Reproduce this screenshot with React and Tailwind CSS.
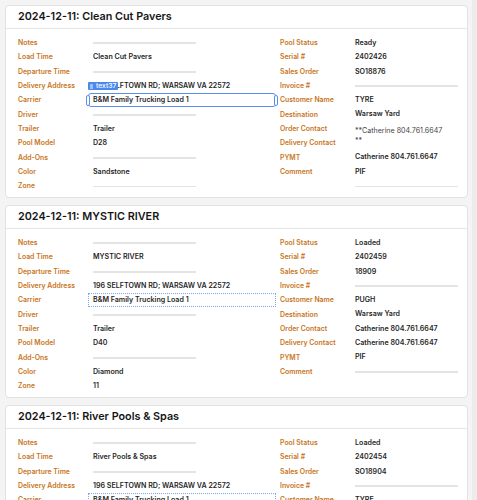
import React from "react";

const ORANGE = "text-[#c9751c]";

function Line() {
  return <div className="h-[1.5px] w-[103px] bg-[#e4e4e4]" />;
}

function Row({ children, className = "" }) {
  return <div className={`h-[14.33px] flex items-center ${className}`}>{children}</div>;
}

function Label({ children }) {
  return (
    <Row>
      <span className={`text-[6.9px] font-semibold ${ORANGE} whitespace-nowrap`}>{children}</span>
    </Row>
  );
}

const VAL = "text-[7.1px] font-semibold text-[#1f1f1f] whitespace-nowrap";

function Val({ v }) {
  if (v === null) {
    return (
      <Row>
        <Line />
      </Row>
    );
  }
  if (typeof v === "object" && v.kind === "two") {
    return (
      <div className="h-[28.66px] flex flex-col justify-center leading-[10px] text-[7.1px] text-[#444] whitespace-nowrap">
        <span>{v.a}</span>
        <span>{v.b}</span>
      </div>
    );
  }
  if (typeof v === "object" && v.kind === "badge") {
    return (
      <Row className="relative">
        <span className={VAL}>{v.text}</span>
        <span className="absolute left-[-5px] top-[3px] h-[8.5px] w-[30px] pl-[2px] rounded-[1px] bg-[#4a88ee] flex items-center gap-[3px] text-[6.8px] leading-none text-white font-medium">
          <span className="w-[3px] h-[5px] bg-[#9fbff5] rounded-[0.5px]" />
          text37
        </span>
      </Row>
    );
  }
  if (typeof v === "object" && v.kind === "selected") {
    return (
      <Row className="relative ml-[-5px] mr-[4px]">
        <div className="h-[14px] w-full border border-[#5b8def] rounded-[3px] flex items-center pl-[4px] relative">
          <span className={VAL}>{v.text}</span>
          <span className="absolute left-[-3px] top-[1px] w-[4px] h-[11px] rounded-full border border-[#5b8def] bg-white" />
          <span className="absolute right-[-3px] top-[1px] w-[4px] h-[11px] rounded-full border border-[#5b8def] bg-white" />
        </div>
      </Row>
    );
  }
  if (typeof v === "object" && v.kind === "dashed") {
    return (
      <Row className="ml-[-5px] mr-[4px]">
        <div className="h-[14px] w-full border border-dotted border-[#7aa7f5] flex items-center pl-[4px]">
          <span className={VAL}>{v.text}</span>
        </div>
      </Row>
    );
  }
  return (
    <Row>
      <span className={VAL}>{v}</span>
    </Row>
  );
}

const LEFT_LABELS = [
  "Notes",
  "Load Time",
  "Departure Time",
  "Delivery Address",
  "Carrier",
  "Driver",
  "Trailer",
  "Pool Model",
  "Add-Ons",
  "Color",
  "Zone",
];
const RIGHT_LABELS = [
  "Pool Status",
  "Serial #",
  "Sales Order",
  "Invoice #",
  "Customer Name",
  "Destination",
  "Order Contact",
  "Delivery Contact",
  "PYMT",
  "Comment",
];

const cards = [
  {
    title: "2024-12-11: Clean Cut Pavers",
    left: [
      null,
      "Clean Cut Pavers",
      null,
      { kind: "badge", text: "196 SELFTOWN RD; WARSAW VA 22572" },
      { kind: "selected", text: "B&M Family Trucking Load 1" },
      null,
      "Trailer",
      "D28",
      null,
      "Sandstone",
      null,
    ],
    right: [
      "Ready",
      "2402426",
      "SO18876",
      null,
      "TYRE",
      "Warsaw Yard",
      { kind: "two", a: "**Catherine 804.761.6647", b: "**" },
      "Catherine 804.761.6647",
      "PIF",
      null,
    ],
  },
  {
    title: "2024-12-11: MYSTIC RIVER",
    left: [
      null,
      "MYSTIC RIVER",
      null,
      "196 SELFTOWN RD; WARSAW VA 22572",
      { kind: "dashed", text: "B&M Family Trucking Load 1" },
      null,
      "Trailer",
      "D40",
      null,
      "Diamond",
      "11",
    ],
    right: [
      "Loaded",
      "2402459",
      "18909",
      null,
      "PUGH",
      "Warsaw Yard",
      "Catherine 804.761.6647",
      "Catherine 804.761.6647",
      "PIF",
      null,
    ],
  },
  {
    title: "2024-12-11: River Pools & Spas",
    left: [
      null,
      "River Pools & Spas",
      null,
      "196 SELFTOWN RD; WARSAW VA 22572",
      { kind: "dashed", text: "B&M Family Trucking Load 1" },
      null,
      "Trailer",
      "D34",
      null,
      "Sandstone",
      "11",
    ],
    right: [
      "Loaded",
      "2402454",
      "SO18904",
      null,
      "TYRE",
      "Warsaw Yard",
      "Catherine 804.761.6647",
      "Catherine 804.761.6647",
      "PIF",
      null,
    ],
  },
];

function Card({ c }) {
  return (
    <div className="h-[193px] shrink-0 bg-white border border-[#e2e2e2] rounded-[4px] overflow-hidden">
      <div className="h-[23px] border-b border-[#e6e6e6] flex items-center pl-[12px]">
        <h2 className="text-[10.8px] font-semibold text-[#161616] leading-none">{c.title}</h2>
      </div>
      <div className="pt-[7px] pl-[12px] flex">
        <div className="w-[75px] flex flex-col">
          {LEFT_LABELS.map((l) => (
            <Label key={l}>{l}</Label>
          ))}
        </div>
        <div className="w-[187px] flex flex-col">
          {c.left.map((v, i) => (
            <Val key={i} v={v} />
          ))}
        </div>
        <div className="w-[75px] flex flex-col">
          {RIGHT_LABELS.map((l) => (
            <Label key={l}>{l}</Label>
          ))}
        </div>
        <div className="flex-1 flex flex-col">
          {c.right.map((v, i) => (
            <Val key={i} v={v} />
          ))}
        </div>
      </div>
    </div>
  );
}

export default function App() {
  return (
    <div
      className="h-[500px] overflow-hidden bg-[#f4f4f4] flex"
      style={{ fontFamily: "Inter, 'Noto Sans', sans-serif" }}
    >
      <div className="w-[472px] pl-[5px] pt-[5px] pr-[4px] flex flex-col gap-[7px]">
        {cards.map((c) => (
          <Card key={c.title} c={c} />
        ))}
      </div>
      <div className="w-[5px] bg-[#ececec]" />
    </div>
  );
}
